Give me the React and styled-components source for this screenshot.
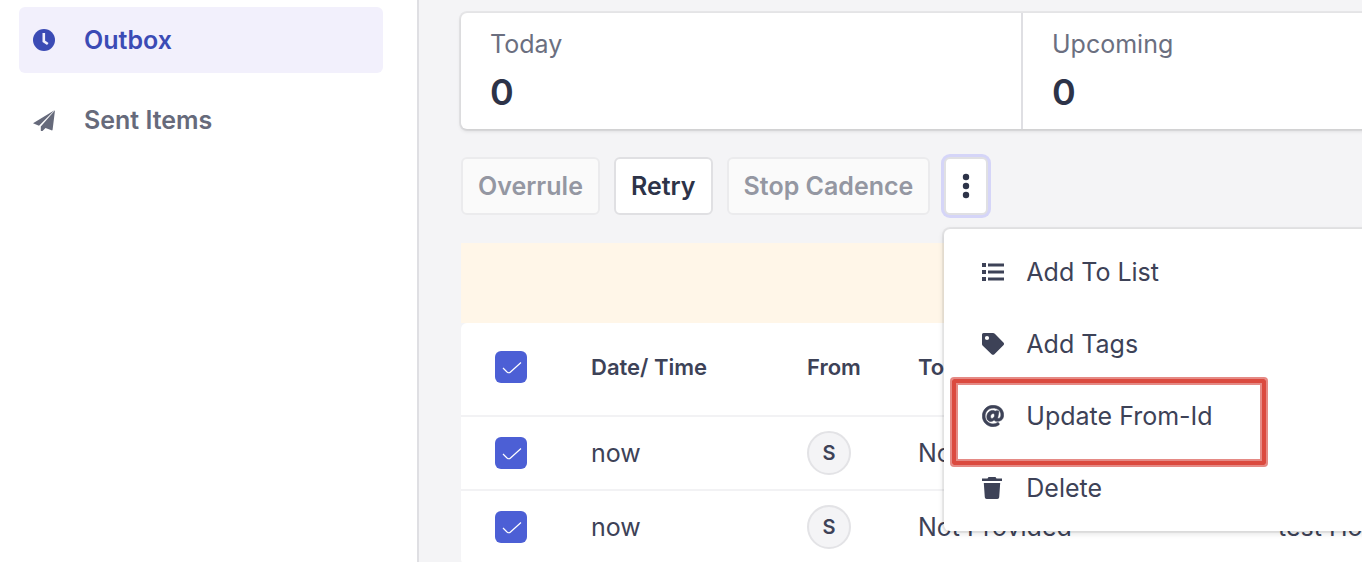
import React from 'react'
import styled, { createGlobalStyle, css } from "styled-components";
import { FaAt } from 'react-icons/fa';

const GlobalStyle=createGlobalStyle`
   *, *::before, *::after {
      box-sizing:border-box;
   }
   body {
      margin:0;
      background:#f4f4f6;
      color:#3d4257;
      font-family:Inter, "Liberation Sans", sans-serif;
      font-size:25px;
      line-height:32px;
   }
   button {
      font:inherit;
   }
`;

const Page=styled.div`
   display:flex;
   height:100vh;
   overflow:hidden;
`;

const Sidebar=styled.nav`
   display:flex;
   flex-direction:column;
   flex:0 0 419px;
   gap:14px;
   padding:7px 34px 0 19px;
   background:#fff;
   border-right:2px solid #dfdfe3;
`;

const SidebarLink=styled.a`
   display:flex;
   align-items:center;
   gap:29px;
   height:66px;
   padding:0 14px;
   border-radius:6px;
   font-weight:600;
   text-decoration:none;
   color:${props => props.$active ? '#3b4bb5' : '#666a7b'};
   background:${props => props.$active ? '#f2f0fc' : 'transparent'};
`;

const Main=styled.main`
   flex:1;
   min-width:0;
   padding:13px 0 0 42px;
   overflow:hidden;
`;

const Stats=styled.section`
   display:flex;
   width:max-content;
   background:#fff;
   border-radius:6px;
   box-shadow:0 0 0 2px rgba(0,0,0,.05), 0 2px 4px rgba(0,0,0,.12);
`;

const Stat=styled.div`
   width:562px;
   height:116px;
   padding:15px 29px;
   border-right:2px solid #dfdfe3;
`;

const StatLabel=styled.div`
   color:#6b6f80;
`;

const StatValue=styled.div`
   padding-top:8px;
   font-size:36px;
   line-height:48px;
   font-weight:600;
   color:#2d3348;
`;

const Toolbar=styled.div`
   display:flex;
   gap:14px;
   padding:28px 0;
`;

const Button=styled.button`
   display:flex;
   align-items:center;
   justify-content:center;
   height:58px;
   padding:0 15px;
   border:2px solid #e0e0e3;
   border-radius:6px;
   background:#fff;
   color:#2d3348;
   font-weight:600;
   white-space:nowrap;

   &:disabled {
      border-color:#ebebed;
      background:#fafafa;
      color:#9497a2;
   }

   ${props => props.$open && css`
      width:44px;
      padding:0;
      box-shadow:0 0 0 3px #d5d5f8;
   `}
`;

const MenuAnchor=styled.div`
   position:relative;
`;

const Menu=styled.ul`
   position:absolute;
   z-index:1;
   top:calc(100% + 14px);
   left:0;
   width:440px;
   margin:0;
   padding:7px 0;
   list-style:none;
   background:#fff;
   border-radius:6px;
   box-shadow:0 0 0 2px rgba(0,0,0,.05), 0 2px 6px rgba(0,0,0,.14);
`;

const MenuItem=styled.li`
   position:relative;
`;

const MenuButton=styled.button`
   display:flex;
   align-items:center;
   gap:22px;
   width:100%;
   height:72px;
   padding:0 38px;
   border:0;
   background:none;
   color:#3d4257;
   text-align:left;
`;

const Highlight=styled.span`
   position:absolute;
   top:-1px;
   left:8px;
   width:314px;
   height:86px;
   border:4px solid #db4a3f;
   border-radius:2px;
   box-shadow:0 0 0 2px #e58a85, inset 0 0 0 2px #e58a85;
   pointer-events:none;
`;

const Notice=styled.div`
   height:80px;
   background:#fff6e8;
`;

const Table=styled.table`
   width:1100px;
   table-layout:fixed;
   border-collapse:separate;
   border-spacing:0;
   background:#fff;
   border-radius:6px;
`;

const HeadCell=styled.th`
   width:${props => props.$width};
   height:94px;
   padding:0 0 4px;
   border-bottom:2px solid #f2f2f4;
   font-size:22px;
   font-weight:600;
   text-align:left;
`;

const Cell=styled.td`
   height:74px;
   padding:0;
   border-bottom:2px solid #f2f2f4;
   white-space:nowrap;
`;

const CheckLabel=styled.label`
   display:grid;
   width:32px;
   margin-left:34px;

   input, svg {
      grid-area:1 / 1;
      width:32px;
      height:32px;
   }
`;

const CheckInput=styled.input`
   appearance:none;
   margin:0;
   border-radius:6px;
   border:2px solid #c9cad2;

   &:checked {
      border:0;
      background:#4c5fd5;
   }

   & + svg {
      visibility:hidden;
      pointer-events:none;
   }

   &:checked + svg {
      visibility:visible;
   }
`;

const Avatar=styled.span`
   display:flex;
   align-items:center;
   justify-content:center;
   width:44px;
   height:44px;
   border:2px solid #e3e3e6;
   border-radius:50%;
   background:#f4f4f6;
   font-size:20px;
   font-weight:600;
`;

const Icon=styled.svg`
   flex:none;
   width:22px;
   height:22px;
   fill:currentColor;
`;

const Dots=styled(Icon)`
   height:26px;
`;

const AtIcon=styled(FaAt)`
   flex:none;
   width:22px;
   height:22px;
   stroke:currentColor;
   stroke-width:14px;
`;

const ClockIcon = () => (
    <Icon viewBox="0 0 22 22">
        <circle cx="11" cy="11" r="11" />
        <path d="M10.800 4v8.200l4 2.800" fill="none" stroke="#f2f0fc" strokeWidth="2.600" />
    </Icon>
)

const PlaneIcon = () => (
    <Icon viewBox="0 0 22 22">
        <path d="M0 14.200 21.500 1.200 6 16.800ZM22 1.200 19.600 20.700q-.2.900-1.100.6L12.500 19 9.500 22q-1.500.9-1.700-.6V17.500Z" />
    </Icon>
)

const ListIcon = () => (
    <Icon viewBox="0 0 22 22">
        <path d="M0 2h4v4H0zM0 9h4v4H0zM0 16h4v4H0zM6 2.500h16v3H6zM6 9.500h16v3H6zM6 16.500h16v3H6z" />
    </Icon>
)

const TagIcon = () => (
    <Icon viewBox="0 0 22 22" fillRule="evenodd">
        <path d="M0 1.500Q0 0 1.500 0H11q1 0 1.800.8l8.600 8.600q1.300 1.400 0 2.800l-9 9q-1.400 1.300-2.800 0L.8 12.700Q0 11.900 0 10.900ZM5 2.900a2.100 2.100 0 1 0 0 4.200 2.100 2.100 0 0 0 0-4.200Z" />
    </Icon>
)

const TrashIcon = () => (
    <Icon viewBox="0 0 22 22">
        <path d="M6.500 0h7l1 1.500H20V4H0V1.500h5.500ZM1.800 6h16.400l-1 14.200q-.1 1.800-1.900 1.800H4.700q-1.800 0-1.900-1.800Z" />
    </Icon>
)

const DotsIcon = () => (
    <Dots viewBox="0 0 22 26">
        <circle cx="11" cy="4" r="3.200" />
        <circle cx="11" cy="13" r="3.200" />
        <circle cx="11" cy="22" r="3.200" />
    </Dots>
)

const stats = [
    { label: 'Today', value: 0 },
    { label: 'Upcoming', value: 0 },
]

const actions = [
    { label: 'Add To List', ActionIcon: ListIcon },
    { label: 'Add Tags', ActionIcon: TagIcon },
    { label: 'Update From-Id', ActionIcon: AtIcon, highlighted: true },
    { label: 'Delete', ActionIcon: TrashIcon },
]

const rows = [
    { id: 1, time: 'now', from: 'S', to: 'Not Provided', subject: 'test Ho' },
    { id: 2, time: 'now', from: 'S', to: 'Not Provided', subject: 'test Ho' },
]

const Checkbox = ({ label }) => (
    <CheckLabel>
        <CheckInput type="checkbox" defaultChecked aria-label={label} />
        <svg viewBox="0 0 32 32" fill="none" stroke="#fff" strokeWidth="1.2">
            <path d="M8 17l4 4q2 1.500 3.500 0L26 11.500" />
        </svg>
    </CheckLabel>
)

const App = () => {
    return (
        <Page>
            <GlobalStyle />
            <Sidebar>
                <SidebarLink href="#outbox" $active><ClockIcon />Outbox</SidebarLink>
                <SidebarLink href="#sent"><PlaneIcon />Sent Items</SidebarLink>
            </Sidebar>
            <Main>
                <Stats>
                    {stats.map(stat => (
                        <Stat key={stat.label}>
                            <StatLabel>{stat.label}</StatLabel>
                            <StatValue>{stat.value}</StatValue>
                        </Stat>
                    ))}
                </Stats>
                <Toolbar>
                    <Button disabled>Overrule</Button>
                    <Button>Retry</Button>
                    <Button disabled>Stop Cadence</Button>
                    <MenuAnchor>
                        <Button $open aria-label="More actions" aria-expanded="true"><DotsIcon /></Button>
                        <Menu>
                            {actions.map(({ label, ActionIcon, highlighted }) => (
                                <MenuItem key={label}>
                                    <MenuButton><ActionIcon />{label}</MenuButton>
                                    {highlighted && <Highlight />}
                                </MenuItem>
                            ))}
                        </Menu>
                    </MenuAnchor>
                </Toolbar>
                <Notice />
                <Table>
                    <thead>
                        <tr>
                            <HeadCell $width="130px"><Checkbox label="Select all" /></HeadCell>
                            <HeadCell $width="216px">Date/ Time</HeadCell>
                            <HeadCell $width="111px">From</HeadCell>
                            <HeadCell $width="360px">To</HeadCell>
                            <HeadCell $width="auto" />
                        </tr>
                    </thead>
                    <tbody>
                        {rows.map(row => (
                            <tr key={row.id}>
                                <Cell><Checkbox label="Select row" /></Cell>
                                <Cell>{row.time}</Cell>
                                <Cell><Avatar>{row.from}</Avatar></Cell>
                                <Cell>{row.to}</Cell>
                                <Cell>{row.subject}</Cell>
                            </tr>
                        ))}
                    </tbody>
                </Table>
            </Main>
        </Page>
    )
}

export default App
